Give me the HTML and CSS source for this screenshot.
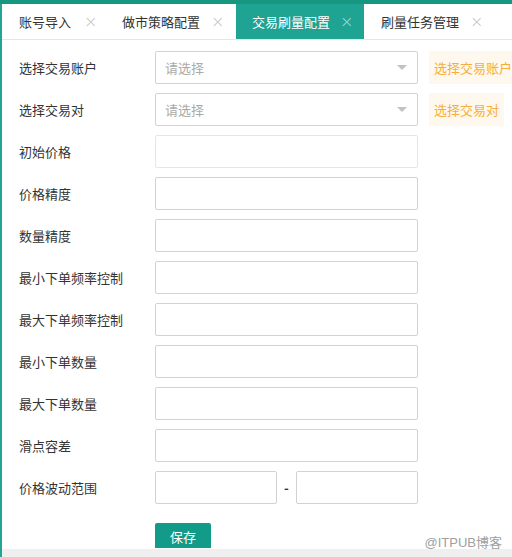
FILE: index.html
```html
<!DOCTYPE html>
<html lang="zh-CN">
<head>
<meta charset="utf-8">
<link rel="stylesheet" href="styles.css">
</head>
<body>
<div class="topbar"></div>
<div class="main">
  <div class="tabs">
    <div class="tab tab1"><span>账号导入</span><span class="x">×</span></div>
    <div class="tab tab2"><span>做市策略配置</span><span class="x">×</span></div>
    <div class="tab active"><span>交易刷量配置</span><span class="x">×</span></div>
    <div class="tab tab4"><span>刷量任务管理</span><span class="x">×</span></div>
  </div>
  <div class="form">
    <div class="row">
      <label>选择交易账户</label>
      <div class="select"><span class="ph">请选择</span><i class="caret"></i></div>
      <div class="hint">选择交易账户</div>
    </div>
    <div class="row">
      <label>选择交易对</label>
      <div class="select"><span class="ph">请选择</span><i class="caret"></i></div>
      <div class="hint">选择交易对</div>
    </div>
    <div class="row"><label>初始价格</label><div class="input light"></div></div>
    <div class="row"><label>价格精度</label><div class="input"></div></div>
    <div class="row"><label>数量精度</label><div class="input"></div></div>
    <div class="row"><label>最小下单频率控制</label><div class="input"></div></div>
    <div class="row"><label>最大下单频率控制</label><div class="input"></div></div>
    <div class="row"><label>最小下单数量</label><div class="input"></div></div>
    <div class="row"><label>最大下单数量</label><div class="input"></div></div>
    <div class="row"><label>滑点容差</label><div class="input"></div></div>
    <div class="row">
      <label>价格波动范围</label>
      <div class="range">
        <div class="input half"></div>
        <span class="dash">-</span>
        <div class="input half"></div>
      </div>
    </div>
    <div class="btnrow"><button class="save">保存</button></div>
  </div>
  <div class="footer"></div>
  <div class="watermark">@ITPUB博客</div>
</div>
</body>
</html>
```
FILE: styles.css
```css
* { box-sizing: border-box; }
html, body {
  margin: 0;
  padding: 0;
  background: #fff;
  font-family: "Noto Sans CJK SC", "Noto Sans", sans-serif;
  font-size: 13px;
  color: #333;
  width: 512px;
  height: 557px;
  overflow: hidden;
}
.topbar {
  height: 4px;
  background: #17977f;
}
.main {
  position: relative;
  border-left: 2px solid #24a493;
  height: 553px;
}
.tabs {
  display: flex;
  height: 36px;
  border-bottom: 1px solid #e6e6e6;
}
.tab {
  display: flex;
  align-items: center;
  height: 35px;
  padding-left: 17px;
  color: #333;
  white-space: nowrap;
  flex-shrink: 0;
}
.tab .x {
  color: #c2c2c2;
  font-size: 16px;
  font-family: "DejaVu Sans", sans-serif;
  font-weight: 300;
}
.tab1 { width: 103px; }
.tab1 .x { margin-left: 13px; }
.tab2 { width: 131px; }
.tab2 .x { margin-left: 11px; }
.tab.active {
  width: 128px;
  padding-left: 16px;
  background: #1fa392;
  color: #fff;
}
.tab.active .x { color: #a6ddd5; margin-left: 10px; }
.tab4 { width: 140px; }
.tab4 .x { margin-left: 11px; }

.form {
  padding-top: 11px;
}
.row {
  display: flex;
  align-items: center;
  height: 33px;
  margin-bottom: 9px;
}
.row label {
  flex-shrink: 0;
  width: 153px;
  padding-left: 17px;
  color: #333;
}
.select, .input {
  flex-shrink: 0;
  width: 263px;
  height: 33px;
  border: 1px solid #d2d2d2;
  border-radius: 2px;
  background: #fff;
}
.input.light { border-color: #e6e6e6; }
.select {
  display: flex;
  align-items: center;
  justify-content: space-between;
  padding: 0 10px 0 9px;
}
.ph { color: #aaa; }
.caret {
  width: 0;
  height: 0;
  border-left: 5px solid transparent;
  border-right: 5px solid transparent;
  border-top: 5px solid #c2c2c2;
}
.hint {
  flex-shrink: 0;
  margin-left: 11px;
  height: 33px;
  display: flex;
  align-items: center;
  padding: 0 5px;
  background: #fff8ee;
  color: #f7ad3a;
  white-space: nowrap;
}
.range {
  display: flex;
  align-items: center;
  width: 263px;
  flex-shrink: 0;
}
.input.half { width: 122px; }
.dash {
  width: 19px;
  text-align: center;
  color: #333;
  font-weight: bold;
}
.btnrow {
  padding-left: 153px;
  padding-top: 10px;
}
.save {
  width: 56px;
  height: 25px;
  border: none;
  border-radius: 2px 2px 0 0;
  background: #139b8a;
  color: #fff;
  font-family: "Noto Sans CJK SC", sans-serif;
  font-size: 13px;
  padding: 4px 0 0 0;
  display: flex;
  justify-content: center;
  align-items: flex-start;
}
.footer {
  position: absolute;
  left: 0;
  right: 0;
  bottom: 0;
  height: 8px;
  background: #efefef;
}
.watermark {
  position: absolute;
  right: 10px;
  bottom: 6px;
  color: #a0a0a0;
  font-size: 13px;
  font-family: "Liberation Sans", "Noto Sans CJK SC", sans-serif;
}
```
